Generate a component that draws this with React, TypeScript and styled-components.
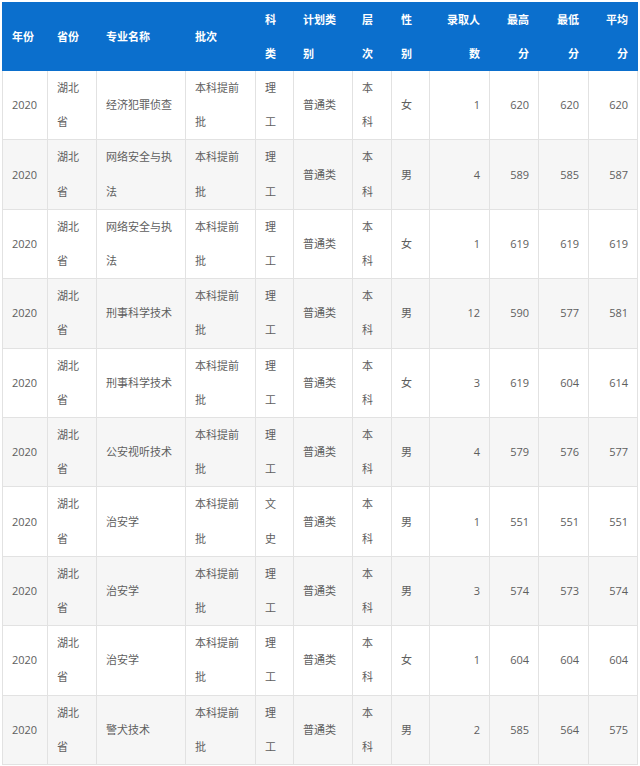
import React from "react";
import styled, { createGlobalStyle } from "styled-components";

const Global = createGlobalStyle`
  html, body { margin: 0; padding: 0; background: #ffffff; }
  body { font-family: "Open Sans", "Noto Sans CJK SC", sans-serif; }
`;

const Page = styled.div`
  padding: 2px 0 0 2px;
`;

const Table = styled.table`
  width: 635px;
  table-layout: fixed;
  border-collapse: collapse;
  font-size: 11px;
  color: #5e5e5e;
`;

const HeadRow = styled.tr`
  background: #0b6fcd;
`;

const HeadCell = styled.th<{ $align?: "left" | "right" }>`
  padding: 0 9px;
  line-height: 33.5px;
  text-align: ${(p) => p.$align ?? "left"};
  vertical-align: middle;
  color: #ffffff;
  font-weight: 700;
  border: 1px solid #0b6fcd;
  white-space: nowrap;
`;

const Row = styled.tr<{ $striped: boolean }>`
  background: ${(p) => (p.$striped ? "#f6f6f6" : "#ffffff")};
`;

const Cell = styled.td<{ $align?: "left" | "right" }>`
  padding: 0 9px 0 9px;
  line-height: 34.2px;
  text-align: ${(p) => p.$align ?? "left"};
  vertical-align: middle;
  border: 1px solid #e2e2e2;
  white-space: nowrap;
`;

const widths = [45, 49, 89, 70, 38, 59, 39, 38, 60, 49, 50, 49];

type Rec = {
  major: string[];
  kind: string[];
  sex: string;
  n: string;
  hi: string;
  lo: string;
  avg: string;
};

const rows: Rec[] = [
  { major: ["经济犯罪侦查"], kind: ["理", "工"], sex: "女", n: "1", hi: "620", lo: "620", avg: "620" },
  { major: ["网络安全与执", "法"], kind: ["理", "工"], sex: "男", n: "4", hi: "589", lo: "585", avg: "587" },
  { major: ["网络安全与执", "法"], kind: ["理", "工"], sex: "女", n: "1", hi: "619", lo: "619", avg: "619" },
  { major: ["刑事科学技术"], kind: ["理", "工"], sex: "男", n: "12", hi: "590", lo: "577", avg: "581" },
  { major: ["刑事科学技术"], kind: ["理", "工"], sex: "女", n: "3", hi: "619", lo: "604", avg: "614" },
  { major: ["公安视听技术"], kind: ["理", "工"], sex: "男", n: "4", hi: "579", lo: "576", avg: "577" },
  { major: ["治安学"], kind: ["文", "史"], sex: "男", n: "1", hi: "551", lo: "551", avg: "551" },
  { major: ["治安学"], kind: ["理", "工"], sex: "男", n: "3", hi: "574", lo: "573", avg: "574" },
  { major: ["治安学"], kind: ["理", "工"], sex: "女", n: "1", hi: "604", lo: "604", avg: "604" },
  { major: ["警犬技术"], kind: ["理", "工"], sex: "男", n: "2", hi: "585", lo: "564", avg: "575" },
];

const Lines = ({ parts }: { parts: string[] }) => (
  <>
    {parts.map((p, i) => (
      <React.Fragment key={i}>
        {i > 0 && <br />}
        {p}
      </React.Fragment>
    ))}
  </>
);

export default function App() {
  return (
    <Page>
      <Global />
      <Table>
        <colgroup>
          {widths.map((w, i) => (
            <col key={i} style={{ width: w }} />
          ))}
        </colgroup>
        <thead>
          <HeadRow>
            <HeadCell>年份</HeadCell>
            <HeadCell>省份</HeadCell>
            <HeadCell>专业名称</HeadCell>
            <HeadCell>批次</HeadCell>
            <HeadCell><Lines parts={["科", "类"]} /></HeadCell>
            <HeadCell><Lines parts={["计划类", "别"]} /></HeadCell>
            <HeadCell><Lines parts={["层", "次"]} /></HeadCell>
            <HeadCell><Lines parts={["性", "别"]} /></HeadCell>
            <HeadCell $align="right"><Lines parts={["录取人", "数"]} /></HeadCell>
            <HeadCell $align="right"><Lines parts={["最高", "分"]} /></HeadCell>
            <HeadCell $align="right"><Lines parts={["最低", "分"]} /></HeadCell>
            <HeadCell $align="right"><Lines parts={["平均", "分"]} /></HeadCell>
          </HeadRow>
        </thead>
        <tbody>
          {rows.map((r, i) => (
            <Row key={i} $striped={i % 2 === 1}>
              <Cell>2020</Cell>
              <Cell><Lines parts={["湖北", "省"]} /></Cell>
              <Cell><Lines parts={r.major} /></Cell>
              <Cell><Lines parts={["本科提前", "批"]} /></Cell>
              <Cell><Lines parts={r.kind} /></Cell>
              <Cell>普通类</Cell>
              <Cell><Lines parts={["本", "科"]} /></Cell>
              <Cell>{r.sex}</Cell>
              <Cell $align="right">{r.n}</Cell>
              <Cell $align="right">{r.hi}</Cell>
              <Cell $align="right">{r.lo}</Cell>
              <Cell $align="right">{r.avg}</Cell>
            </Row>
          ))}
        </tbody>
      </Table>
    </Page>
  );
}
